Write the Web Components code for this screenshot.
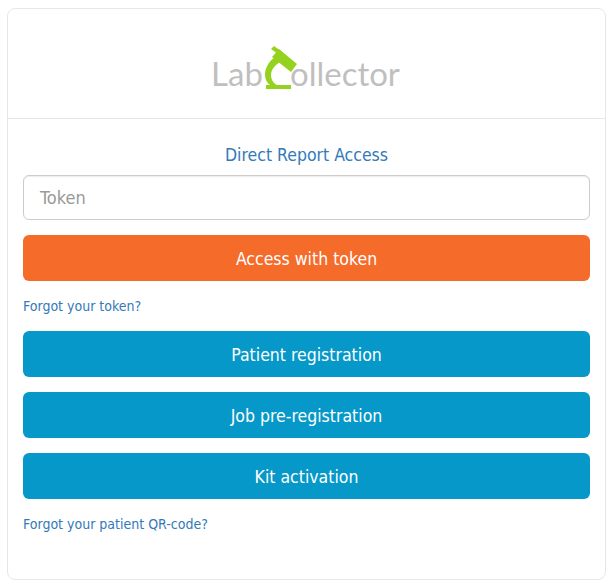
<!DOCTYPE html>
<html lang="en">
<head>
<meta charset="utf-8">
<title>LabCollector</title>
<style>
html, body { margin: 0; background: #fff; }
body { padding: 8px 6px 7px 7px; font-family: "DejaVu Sans", "Noto Sans", sans-serif; font-stretch: condensed; }
</style>
</head>
<body>
<login-card>
  <lab-logo slot="header"></lab-logo>
  <report-title>Direct Report Access</report-title>
  <token-input placeholder="Token"></token-input>
  <action-button color="#f56b2a">Access with token</action-button>
  <help-link>Forgot your token?</help-link>
  <action-button>Patient registration</action-button>
  <action-button>Job pre-registration</action-button>
  <action-button>Kit activation</action-button>
  <help-link>Forgot your patient QR-code?</help-link>
</login-card>
<script>
class LoginCard extends HTMLElement {
  constructor() {
    super();
    this.attachShadow({ mode: 'open' }).innerHTML = `
      <style>
        :host { display: block; height: 572px; box-sizing: border-box; background: #fff;
          border: 1px solid #e7e7e7; border-radius: 8px; }
        header { height: 110px; box-sizing: border-box; border-bottom: 1px solid #e7e7e7;
          display: flex; justify-content: center; }
        main { display: flex; flex-direction: column; padding: 24px 15px 0; }
      </style>
      <header><slot name="header"></slot></header>
      <main><slot></slot></main>`;
  }
}

class LabLogo extends HTMLElement {
  constructor() {
    super();
    this.attachShadow({ mode: 'open' }).innerHTML = `
      <style>
        :host { display: flex; align-items: flex-end; height: 46px; margin-top: 36px; padding-right: 2px;
          font: 400 33px/33px Lato, sans-serif; font-stretch: normal; color: #bfbfbf; }
        svg { display: block; width: 36px; height: 46px; margin: 0 -8px 0 -1px; flex: none; }
        span { display: block; position: relative; top: -1px; }
      </style>
      <span>Lab</span>
      <svg viewBox="0 0 36 46">
        <path d="M9 4 L12 1 L19 6 L16 9 Z" fill="#95d21f"/>
        <path d="M17 4 L35 19 L29 27 L10 12 Z" fill="#95d21f"/>
        <path d="M13 12 C6 17 3 24 3 30 C3 34 5 38 8 40 H4 V44 H29 V40 H15 C11 38 9 34 9 30 C9 25 12 21 18 17 Z" fill="#95d21f"/>
      </svg>
      <span>ollector</span>`;
  }
}

class ReportTitle extends HTMLElement {
  constructor() {
    super();
    this.attachShadow({ mode: 'open' }).innerHTML = `
      <style>
        :host { display: block; text-align: center; color: #337ab7; font-size: 17.5px; line-height: 24px; margin-bottom: 8px; }
      </style>
      <slot></slot>`;
  }
}

class TokenInput extends HTMLElement {
  constructor() {
    super();
    this.attachShadow({ mode: 'open' }).innerHTML = `
      <style>
        :host { display: block; margin-bottom: 15px; }
        div { height: 45px; box-sizing: border-box; border: 1px solid #ccc; border-radius: 6px;
          padding: 0 16px; color: #999; font-size: 18px; line-height: 43px;
          box-shadow: inset 0 1px 1px rgba(0,0,0,.075); }
      </style>
      <div>${this.getAttribute('placeholder')}</div>`;
  }
}

class ActionButton extends HTMLElement {
  constructor() {
    super();
    const bg = this.getAttribute('color') || '#0598c8';
    this.attachShadow({ mode: 'open' }).innerHTML = `
      <style>
        :host { display: block; margin-bottom: 15px; }
        div { height: 46px; border-radius: 6px; background: ${bg}; color: #fff; font-size: 17.5px;
          line-height: 48px; text-align: center; }
      </style>
      <div><slot></slot></div>`;
  }
}

class HelpLink extends HTMLElement {
  constructor() {
    super();
    this.attachShadow({ mode: 'open' }).innerHTML = `
      <style>
        :host { display: block; color: #337ab7; font-size: 14px; line-height: 20px; margin: 0 0 15px; }
      </style>
      <slot></slot>`;
  }
}

customElements.define('login-card', LoginCard);
customElements.define('lab-logo', LabLogo);
customElements.define('report-title', ReportTitle);
customElements.define('token-input', TokenInput);
customElements.define('action-button', ActionButton);
customElements.define('help-link', HelpLink);
</script>
</body>
</html>
